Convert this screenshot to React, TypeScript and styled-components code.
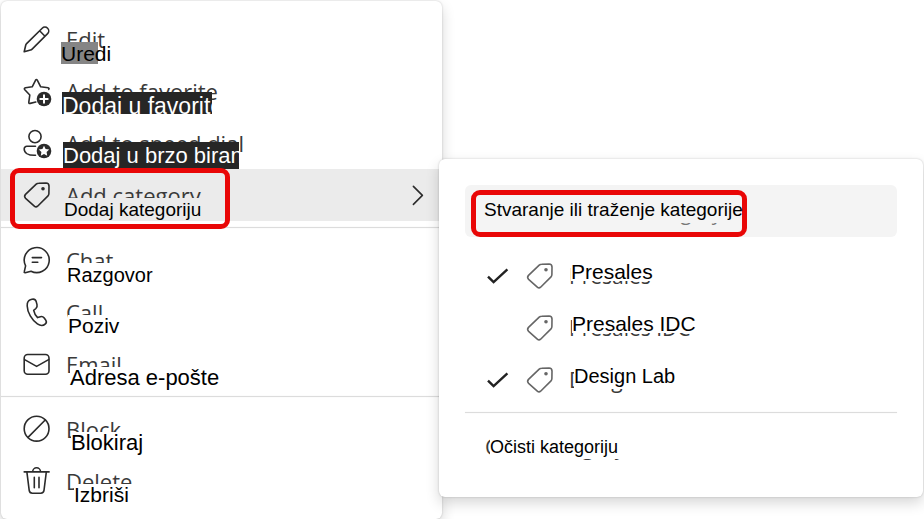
import React from "react";
import styled, { createGlobalStyle, css } from "styled-components";

const GlobalStyle = createGlobalStyle`
  *, *::before, *::after { box-sizing: border-box; }
  body { margin: 0; background: #fff; overflow: hidden; font-family: "Liberation Sans", Arial, sans-serif; }
`;

const Page = styled.main`
  display: grid;
  grid-template-columns: minmax(0, 441fr) minmax(0, 481fr);
  align-items: start;
  padding: 1px 1px 0;
`;

const panel = css`
  min-width: 0;
  background: #fff;
  border-radius: 6px;
  box-shadow: 0 0 2px rgba(0, 0, 0, 0.22), 0 6px 14px rgba(0, 0, 0, 0.16);
`;

const Menu = styled.nav`
  ${panel}
  padding: 12px 0;
`;

const SubMenu = styled.section`
  ${panel}
  position: relative;
  margin: 158px 0 0 -3px;
  padding: 26px 26px 24px;
`;

const Divider = styled.hr<{ $wide?: boolean }>`
  height: 1px;
  margin: ${(p) => (p.$wide ? "6px 0 8px" : "6px 0")};
  border: 0;
  background: #dcdcdc;
  box-shadow: 0 0 1px #dcdcdc;
`;

const Row = styled.button<{ $active?: boolean }>`
  position: relative;
  display: flex;
  align-items: center;
  gap: 16px;
  width: 100%;
  height: 52px;
  padding: 0 18px 0 21px;
  border: 0;
  background: ${(p) => (p.$active ? "#ebebeb" : "transparent")};
  color: #2b2b2b;
  font: inherit;
  text-align: left;
`;

const Icon = styled.svg`
  flex: none;
  width: 28px;
  height: 28px;
  overflow: visible;
  fill: none;
  stroke: currentColor;
  stroke-width: 1.6;
  stroke-linecap: round;
  stroke-linejoin: round;
`;

const TagIcon = styled(Icon)<{ $soft?: boolean }>`
  color: ${(p) => (p.$soft ? "#666" : "#2b2b2b")};
`;

const CheckSlot = styled.span`
  display: flex;
  align-items: center;
  width: 22px;
  height: 24px;
`;

const Name = styled.span`
  position: relative;
  display: block;
  flex: 1;
  height: 52px;
`;

const Original = styled.span<{ $size?: number }>`
  display: block;
  font: 400 ${(p) => p.$size ?? 22}px/52px "Open Sans", "Noto Sans", sans-serif;
  color: #3a3a3a;
  white-space: nowrap;
`;

type Tone = "plain" | "active" | "grey" | "dark";

const tones: Record<Tone, string> = {
  plain: "#fff",
  active: "#ebebeb",
  grey: "linear-gradient(#858585, #858585) 0 0 / 37px 100% no-repeat",
  dark: "#262626",
};

const Translated = styled.span<{
  $x: number;
  $y: number;
  $size: number;
  $tone?: Tone;
  $width?: number;
  $height?: number;
  $line?: number;
}>`
  position: absolute;
  left: ${(p) => p.$x}px;
  top: ${(p) => p.$y}px;
  width: ${(p) => (p.$width ? `${p.$width}px` : "max-content")};
  height: ${(p) => p.$height ?? 22}px;
  padding-right: ${(p) => (p.$width ? 0 : 4)}px;
  overflow: ${(p) => (p.$width ? "hidden" : "visible")};
  background: ${(p) => tones[p.$tone ?? "plain"]};
  color: ${(p) => (p.$tone === "dark" ? "#fff" : "#000")};
  font-size: ${(p) => p.$size}px;
  line-height: ${(p) => p.$line ?? 22}px;
  white-space: nowrap;
`;

const ClearLabel = styled(Translated)`
  padding-right: 10px;
`;

const Highlight = styled.span`
  position: absolute;
  inset: -1px auto -8px 9px;
  width: 220px;
  border: 5px solid #e90707;
  border-radius: 9px;
  pointer-events: none;
`;

const SearchHighlight = styled(Highlight)`
  inset: 5px auto 0 6px;
  width: 276px;
`;

const SearchBox = styled.label`
  position: relative;
  display: block;
  height: 52px;
  margin-bottom: 13px;
  padding-left: 19px;
  border-radius: 6px;
  background: #f4f4f4;
`;

const SearchOriginal = styled(Original)`
  padding: 2px 0 0 24px;
  color: #777;
`;

const SearchInput = styled.input`
  position: absolute;
  left: 19px;
  top: 14px;
  width: 264px;
  height: 24px;
  padding: 0 0 2px;
  border: 0;
  outline: 0;
  background: linear-gradient(#f4f4f4, #f4f4f4) 0 0 / 257px 100% no-repeat;
  color: #000;
  font: 19px/22px "Liberation Sans", Arial, sans-serif;
  &::placeholder { color: #000; opacity: 1; }
`;

const SubRow = styled(Row)`
  padding: 0 0 0 22px;
`;

const ClearRow = styled(Row)`
  padding: 0 0 0 20px;
`;

const EditIcon = () => (
  <Icon viewBox="0 0 28 28">
    <path d="M2.2 26.8 3.7 20.2Q3.9 19.3 4.6 18.6L20.2 3.2a3.8 3.8 0 0 1 5.4 5.4L10.1 24.1Q9.4 24.8 8.5 25ZM17.6 5.8l5.4 5.4" />
  </Icon>
);

const FavoriteIcon = () => (
  <Icon viewBox="0 0 28 28">
    <path d="M13.8 25 8.2 26.4Q6.6 26.8 6.8 25.2L7.8 18 2.8 12.8Q1.6 11.3 3.5 10.8L10.2 9.8 13.5 3.3Q14.5 1.8 15.4 3.3L18.7 9.8 26 10.8Q27.6 11.3 26.8 12.3" />
    <circle cx="22" cy="22" r="7.3" fill="currentColor" stroke="none" />
    <path d="M22 18.3v7.4M18.3 22h7.4" stroke="#fff" strokeWidth="2" />
  </Icon>
);

const SpeedDialIcon = () => (
  <Icon viewBox="0 0 28 28">
    <circle cx="13" cy="7.6" r="6.1" />
    <path d="M13.5 17.3H4.8A2.6 2.6 0 0 0 2.2 19.9c0 3.8 4 6.3 10 6.3h1.3" />
    <circle cx="22" cy="22" r="7.3" fill="currentColor" stroke="none" />
    <path d="m22 16.8 1.6 3.3 3.6.5-2.6 2.5.6 3.6-3.2-1.7-3.2 1.7.6-3.6-2.6-2.5 3.6-.5Z" fill="#fff" stroke="none" />
  </Icon>
);

const Tag = ({ soft }: { soft?: boolean }) => (
  <TagIcon viewBox="0 0 28 28" $soft={soft}>
    <path d="M16.6 2.2 24 2Q27 2 27 5L26.9 12.6Q26.9 14 26 14.9L15.6 25.2Q14 26.6 12.3 25.1L3.6 17.4Q1.7 15.4 3.5 13.4L14.2 3.1Q15.2 2.2 16.6 2.2Z" />
    <circle cx="21" cy="7.8" r="1.8" fill="currentColor" stroke="none" />
  </TagIcon>
);

const ChatIcon = () => (
  <Icon viewBox="0 0 28 28">
    <path d="M3.6 19.8A12.5 12.5 0 1 1 9 25.2L3.2 26.7Q2 26.9 2.3 25.7ZM10.3 11.6h9.2M10.3 16.2h5.5" />
  </Icon>
);

const CallIcon = () => (
  <Icon viewBox="0 0 28 28">
    <path d="M8.3 1.8 10 1.3C12 .8 13.6 1.7 14.2 3.6L15 6.6C15.4 8.2 15 9.4 13.9 10.5L11.7 12.4C12.2 15.2 13.7 17.7 15.6 19.6L18.4 18.7C19.9 18.2 21.1 18.6 22 19.8L23.7 22.1C24.6 23.4 24.5 24.9 23.4 25.9 21.2 28 18 27.7 15.4 25.9 9.8 22 5.4 14.5 5.2 7.9 5.1 4.6 6 2.6 8.3 1.8Z" />
  </Icon>
);

const EmailIcon = () => (
  <Icon viewBox="0 0 28 28">
    <rect x="2.2" y="4.5" width="24.8" height="19.8" rx="3.5" />
    <path d="m2.6 9.6 12 6.8 12-6.8" />
  </Icon>
);

const BlockIcon = () => (
  <Icon viewBox="0 0 28 28">
    <circle cx="14.6" cy="13.7" r="12.4" />
    <path d="M6 22.4 23.2 5" />
  </Icon>
);

const DeleteIcon = () => (
  <Icon viewBox="0 0 28 28">
    <path d="M2.2 4.9h24.9M10.7 4.7a3.9 3.9 0 0 1 7.8 0M4.9 5.2 7.2 23.4Q7.6 26.2 10.4 26.2H18.8Q21.6 26.2 22 23.4L24.3 5.2M12.3 10.4v10.3M17 10.4v10.3" />
  </Icon>
);

const Chevron = styled(Icon)`
  width: 12px;
  height: 20px;
`;

const CheckMark = styled(Icon)`
  width: 22px;
  height: 16px;
  color: #222;
  stroke-width: 2.4;
  stroke-linecap: butt;
  stroke-linejoin: miter;
`;

interface ItemProps {
  icon: React.ReactNode;
  original: string;
  text: string;
  x: number;
  y?: number;
  size: number;
  tone?: Tone;
  width?: number;
  height?: number;
  line?: number;
  active?: boolean;
}

const MenuItem = ({ icon, original, text, x, y = 29, size, tone, width, height, line, active }: ItemProps) => (
  <Row type="button" $active={active} aria-haspopup={active ? "menu" : undefined}>
    {active && <Highlight />}
    {icon}
    <Name>
      <Original aria-hidden="true">{original}</Original>
      <Translated $x={x} $y={y} $size={size} $tone={tone} $width={width} $height={height} $line={line}>
        {text}
      </Translated>
    </Name>
    {active && (
      <Chevron viewBox="0 0 12 20">
        <path d="m1.4 1.4 9 9-9 9" />
      </Chevron>
    )}
  </Row>
);

const categories = [
  { original: "Presales", text: "Presales", checked: true, x: 2, size: 21, height: 20 },
  { original: "Presales IDC", text: "Presales IDC", checked: false, x: 3, size: 21, height: 20 },
  { original: "Design Lab", text: "Design Lab", checked: true, x: 5, size: 20, height: 24 },
];

export default function App() {
  return (
    <>
      <GlobalStyle />
      <Page>
        <Menu>
          <MenuItem icon={<EditIcon />} original="Edit" text="Uredi" x={-5} size={21} tone="grey" line={24} />
          <MenuItem icon={<FavoriteIcon />} original="Add to favorite" text="Dodaj u favorite" x={-4} y={27} size={23} tone="dark" width={150} line={28} />
          <MenuItem icon={<SpeedDialIcon />} original="Add to speed dial" text="Dodaj u brzo biranje" x={-3} y={25} size={22} tone="dark" width={176} height={27} line={28} />
          <MenuItem icon={<Tag />} original="Add category" text="Dodaj kategoriju" x={-2} size={19} tone="active" line={24} active />
          <Divider />
          <MenuItem icon={<ChatIcon />} original="Chat" text="Razgovor" x={1} size={20} line={24} />
          <MenuItem icon={<CallIcon />} original="Call" text="Poziv" x={2} size={21} />
          <MenuItem icon={<EmailIcon />} original="Email" text="Adresa e-pošte" x={4} size={22} />
          <Divider />
          <MenuItem icon={<BlockIcon />} original="Block" text="Blokiraj" x={5} size={22} />
          <MenuItem icon={<DeleteIcon />} original="Delete" text="Izbriši" x={8} size={21} />
        </Menu>
        <SubMenu>
          <SearchBox>
            <SearchHighlight />
            <SearchOriginal $size={20} aria-hidden="true">Create or find category</SearchOriginal>
            <SearchInput
              type="text"
              aria-label="Stvaranje ili traženje kategorije"
              placeholder="Stvaranje ili traženje kategorije"
            />
          </SearchBox>
          {categories.map((c) => (
            <SubRow key={c.text} type="button" role="menuitemcheckbox" aria-checked={c.checked}>
              <CheckSlot>
                {c.checked && (
                  <CheckMark viewBox="0 0 22 16">
                    <path d="m1 8.6 5.6 5.6L20.4 1.4" />
                  </CheckMark>
                )}
              </CheckSlot>
              <Tag soft />
              <Name>
                <Original $size={21} aria-hidden="true">{c.original}</Original>
                <Translated $x={c.x} $y={11} $size={c.size} $height={c.height}>
                  {c.text}
                </Translated>
              </Name>
            </SubRow>
          ))}
          <Divider $wide />
          <ClearRow type="button">
            <Name>
              <Original $size={21} aria-hidden="true">Clear category</Original>
              <ClearLabel $x={5} $y={15} $size={18} $height={23}>
                Očisti kategoriju
              </ClearLabel>
            </Name>
          </ClearRow>
        </SubMenu>
      </Page>
    </>
  );
}
